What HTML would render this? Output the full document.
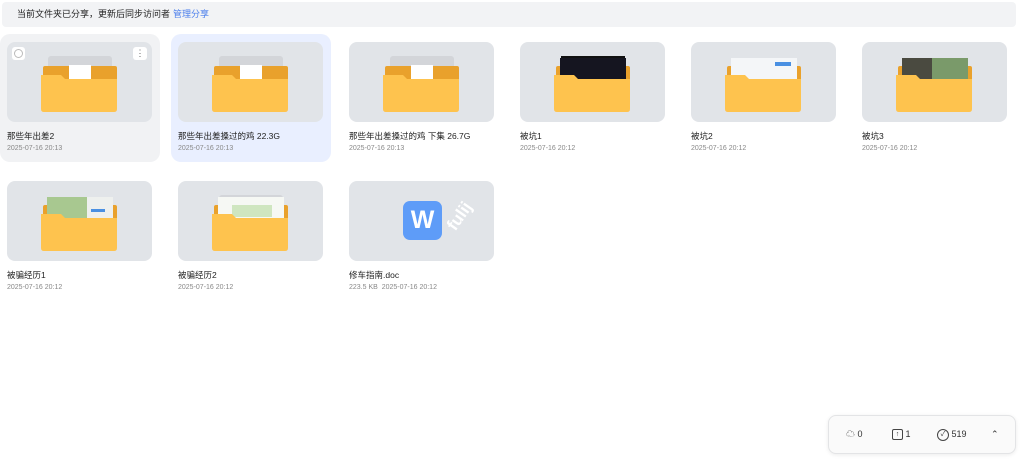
<!DOCTYPE html><html><head><meta charset="utf-8"><style>
body{margin:0;width:1024px;height:467px;background:#fff;font-family:"Liberation Sans","Noto Sans CJK SC",sans-serif;position:relative;overflow:hidden}
.ban{position:absolute;left:2px;top:2px;width:1014px;height:25px;background:#f2f3f5;border-radius:4px;font-size:9px;color:#222;line-height:25px}
.ban span{position:absolute;left:15px}.ban a{position:absolute;left:171px;color:#4a7eec}
.card{position:absolute;width:160px;height:128px;border-radius:10px}
.th{position:absolute;left:7px;top:8px;width:145px;height:80px;background:#e1e4e8;border-radius:8px;overflow:hidden}
.t{position:absolute;left:7px;top:96px;font-size:8.5px;color:#222;white-space:nowrap}
.d{position:absolute;left:7px;top:111px;font-size:7px;color:#888;white-space:nowrap}
.f{position:absolute;left:34px;top:14px;width:78px;height:56px}
</style></head><body>
<div class="ban"><span>当前文件夹已分享，更新后同步访问者</span><a>管理分享</a></div>
<svg width="0" height="0" style="position:absolute"><defs>
<g id="fold"><rect x="7" y="0" width="64" height="30" rx="3" fill="#d3d5d9"/><rect x="2" y="10" width="74" height="30" rx="2" fill="#e9a12c"/><rect x="28" y="9" width="22" height="18" fill="#fff"/><path d="M0 19 h20 l4 4 h52 v30 q0 3 -3 3 h-70 q-3 0 -3 -3z" fill="#fec34e"/></g></defs></svg>
<div class="card" style="left:0;top:34px;background:#f1f2f4"><div class="th"><svg class="f" viewBox="0 0 78 56"><use href="#fold"/></svg><div style="position:absolute;left:5px;top:5px;width:13px;height:13px;background:#fff;border-radius:3px"><div style="margin:2px;width:7px;height:7px;border:1px solid #bbb;border-radius:50%"></div></div><div style="position:absolute;left:126px;top:5px;width:14px;height:13px;background:#fff;border-radius:3px;font-size:9px;text-align:center;line-height:12px;color:#666">⋮</div></div><div class="t">那些年出差2</div><div class="d">2025-07-16 20:13</div></div>
<div class="card" style="left:171px;top:34px;background:#e9efff"><div class="th"><svg class="f" viewBox="0 0 78 56"><use href="#fold"/></svg></div><div class="t">那些年出差搡过的鸡 22.3G</div><div class="d">2025-07-16 20:13</div></div>
<div class="card" style="left:342px;top:34px"><div class="th"><svg class="f" viewBox="0 0 78 56"><use href="#fold"/></svg></div><div class="t">那些年出差搡过的鸡 下集 26.7G</div><div class="d">2025-07-16 20:13</div></div>
<div class="card" style="left:513px;top:34px"><div class="th"><svg class="f" viewBox="0 0 78 56"><rect x="7" y="0" width="64" height="30" fill="#111"/><rect x="50" y="5" width="18" height="14" fill="#8a3ce0"/><rect x="2" y="10" width="74" height="30" rx="2" fill="#e9a12c"/><rect x="6" y="2" width="66" height="24" fill="#151520"/><path d="M0 19 h20 l4 4 h52 v30 q0 3 -3 3 h-70 q-3 0 -3 -3z" fill="#fec34e"/></svg></div><div class="t">被坑1</div><div class="d">2025-07-16 20:12</div></div>
<div class="card" style="left:684px;top:34px"><div class="th"><svg class="f" viewBox="0 0 78 56"><rect x="2" y="10" width="74" height="30" rx="2" fill="#e9a12c"/><rect x="6" y="2" width="66" height="24" fill="#f4f6f8"/><rect x="50" y="6" width="16" height="4" fill="#4a90e2"/><path d="M0 19 h20 l4 4 h52 v30 q0 3 -3 3 h-70 q-3 0 -3 -3z" fill="#fec34e"/></svg></div><div class="t">被坑2</div><div class="d">2025-07-16 20:12</div></div>
<div class="card" style="left:855px;top:34px"><div class="th"><svg class="f" viewBox="0 0 78 56"><rect x="2" y="10" width="74" height="30" rx="2" fill="#e9a12c"/><rect x="6" y="2" width="66" height="24" fill="#7a9a6a"/><rect x="6" y="2" width="30" height="24" fill="#4a4a40"/><path d="M0 19 h20 l4 4 h52 v30 q0 3 -3 3 h-70 q-3 0 -3 -3z" fill="#fec34e"/></svg></div><div class="t">被坑3</div><div class="d">2025-07-16 20:12</div></div>
<div class="card" style="left:0;top:173px"><div class="th"><svg class="f" viewBox="0 0 78 56"><rect x="2" y="10" width="74" height="30" rx="2" fill="#e9a12c"/><rect x="6" y="2" width="66" height="24" fill="#eef0ee"/><rect x="6" y="2" width="40" height="22" fill="#a8c890"/><rect x="50" y="14" width="14" height="3" fill="#4a90e2"/><path d="M0 19 h20 l4 4 h52 v30 q0 3 -3 3 h-70 q-3 0 -3 -3z" fill="#fec34e"/></svg></div><div class="t">被骗经历1</div><div class="d">2025-07-16 20:12</div></div>
<div class="card" style="left:171px;top:173px"><div class="th"><svg class="f" viewBox="0 0 78 56"><rect x="7" y="0" width="64" height="30" rx="3" fill="#d3d5d9"/><rect x="2" y="10" width="74" height="30" rx="2" fill="#e9a12c"/><rect x="6" y="2" width="66" height="24" fill="#f6f8f4"/><rect x="20" y="10" width="40" height="12" fill="#cfe6c0"/><path d="M0 19 h20 l4 4 h52 v30 q0 3 -3 3 h-70 q-3 0 -3 -3z" fill="#fec34e"/></svg></div><div class="t">被骗经历2</div><div class="d">2025-07-16 20:12</div></div>
<div class="card" style="left:342px;top:173px"><div class="th"><div style="position:absolute;left:54px;top:20px;width:39px;height:39px;background:#5e9cf8;border-radius:7px;color:#fff;font-weight:bold;font-size:25px;text-align:center;line-height:39px">W</div><div style="position:absolute;left:94px;top:14px;color:#fff;font-weight:bold;font-size:17px;transform:rotate(-55deg);transform-origin:left top;top:42px">fulij</div></div><div class="t">修车指南.doc</div><div class="d">223.5 KB&nbsp;&nbsp;2025-07-16 20:12</div></div>
<div style="position:absolute;left:828px;top:415px;width:186px;height:37px;border:1px solid #e3e4e6;border-radius:8px;background:#fafafa;box-shadow:0 1px 4px rgba(0,0,0,.08);font-size:9px;color:#333;line-height:37px">
<span style="position:absolute;left:17px">☁ 0</span><span style="position:absolute;left:63px"><span style="display:inline-block;width:9px;height:9px;border:1px solid #444;border-radius:2px;font-size:7px;line-height:9px;text-align:center;vertical-align:middle">↑</span> 1</span><span style="position:absolute;left:108px"><span style="display:inline-block;width:10px;height:10px;border:1px solid #444;border-radius:50%;font-size:7px;line-height:10px;text-align:center;vertical-align:middle">✓</span> 519</span><span style="position:absolute;left:162px">⌃</span></div>
</body></html>
